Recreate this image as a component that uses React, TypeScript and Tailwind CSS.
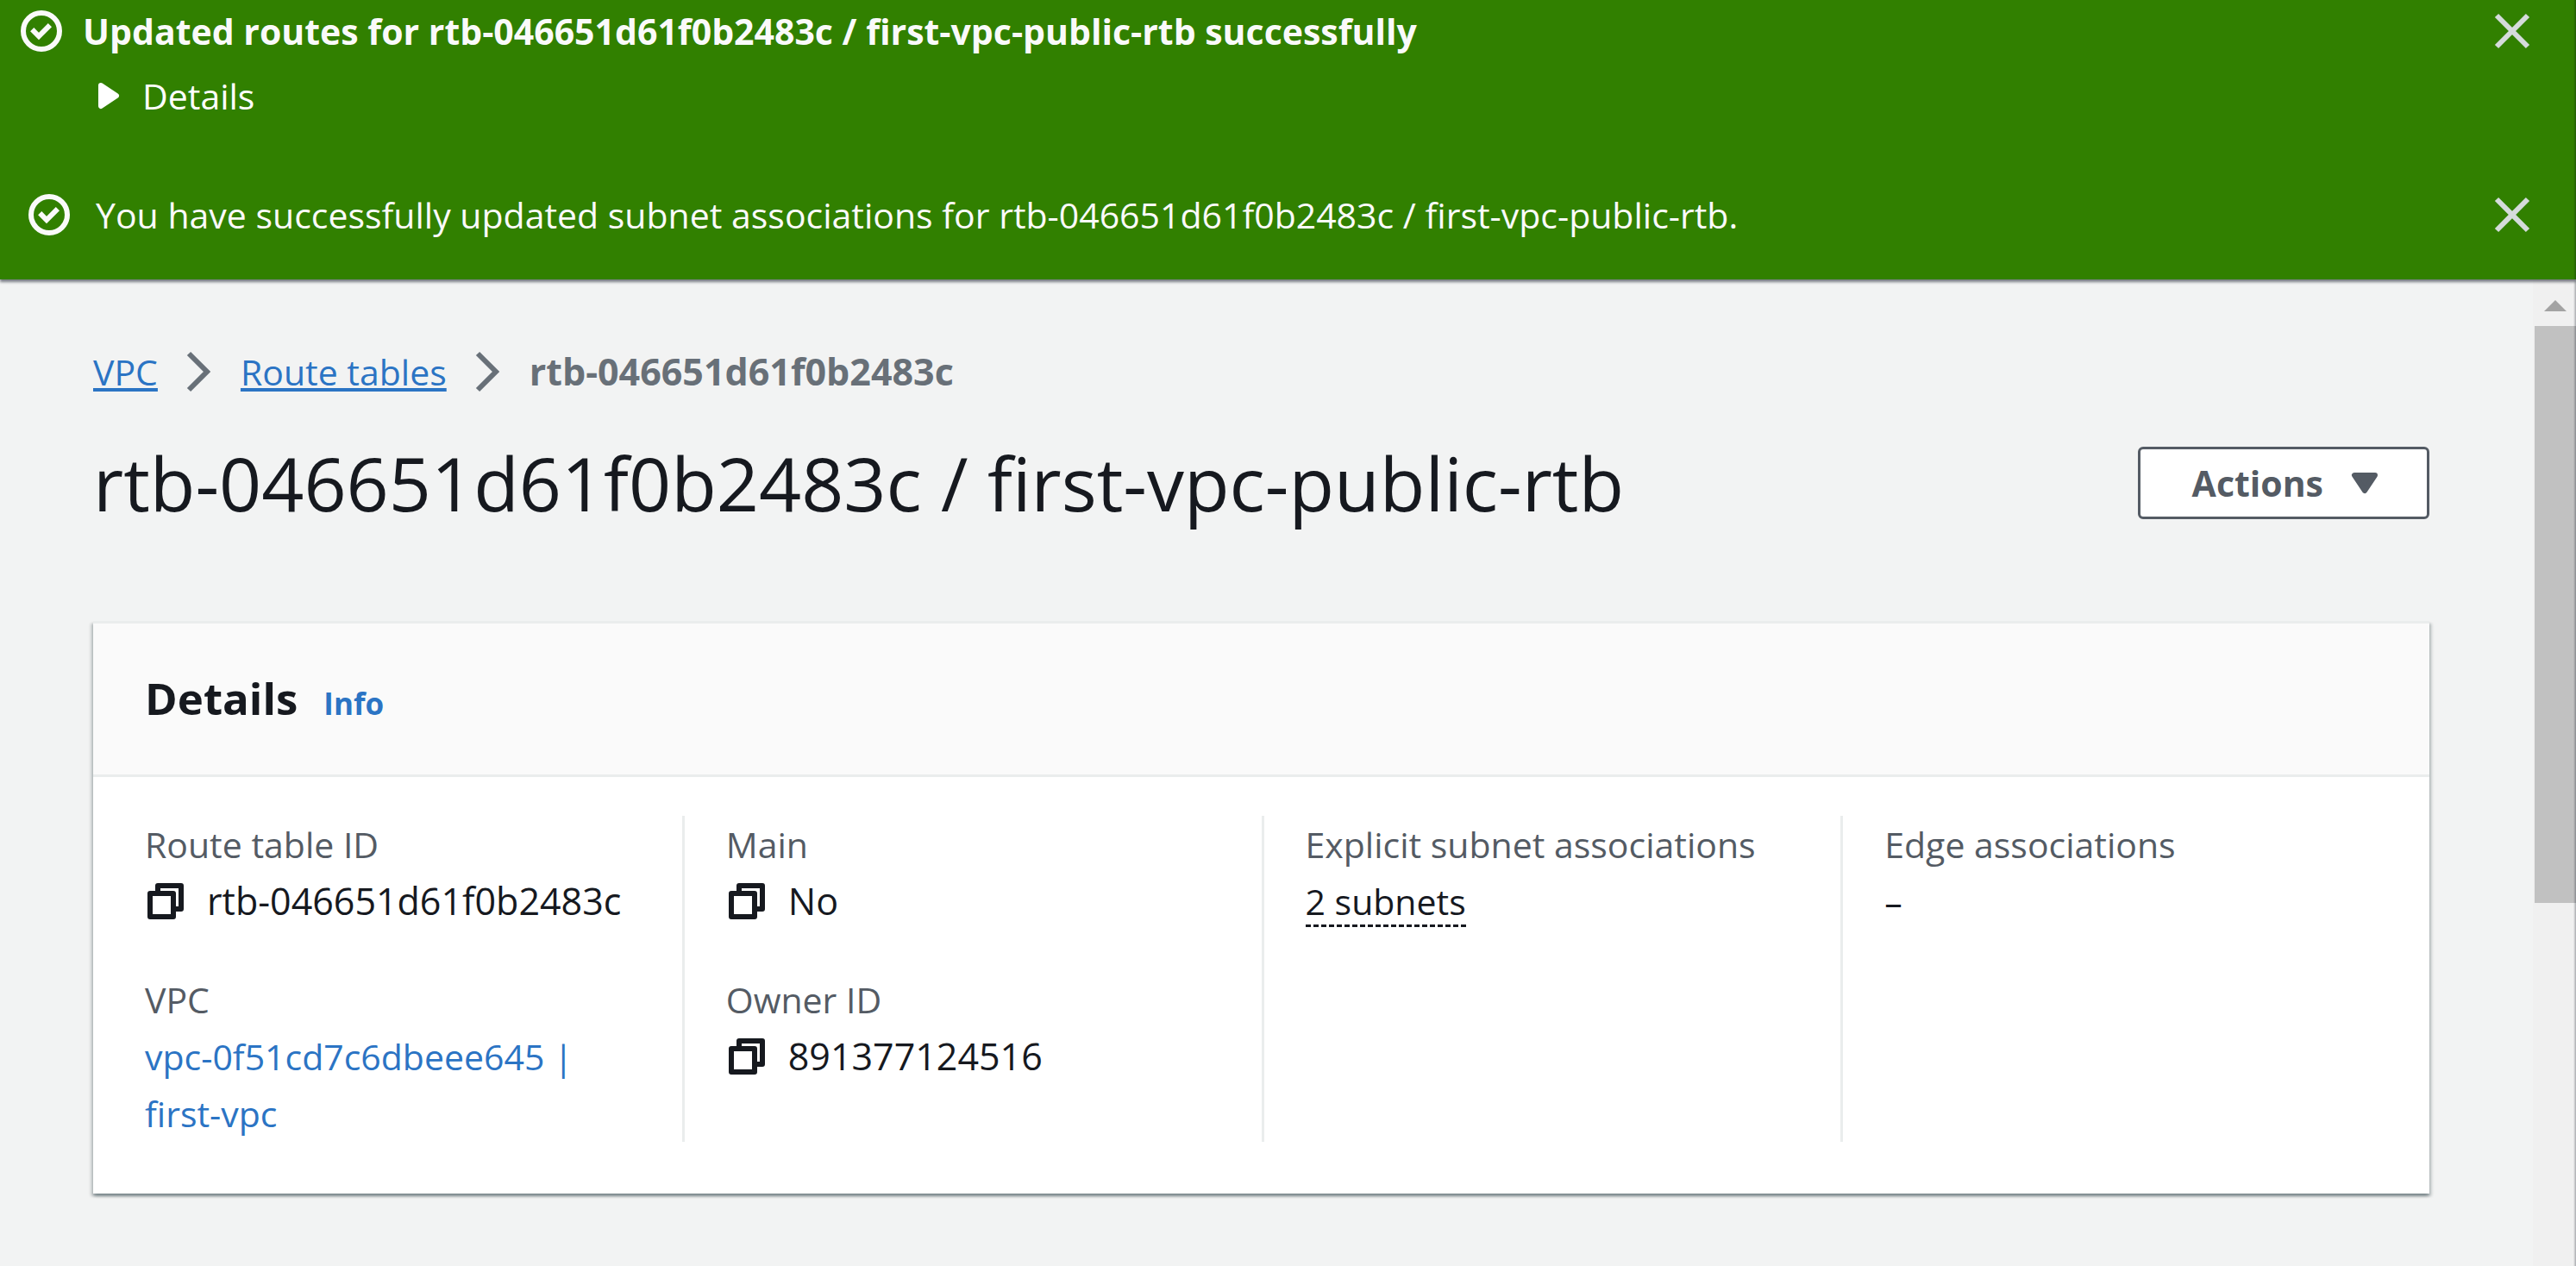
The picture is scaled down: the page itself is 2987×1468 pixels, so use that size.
import React, { useState } from 'react';

const strokeProps = {
  fill: 'none',
  stroke: 'currentColor',
  strokeWidth: 2,
} as const;

function CheckIcon() {
  return (
    <svg viewBox="0 0 16 16" className="size-12 shrink-0" aria-hidden="true">
      <circle cx="8" cy="8" r="7" {...strokeProps} />
      <path d="M4.4 7.4 7 10l4.3-4.3" {...strokeProps} />
    </svg>
  );
}

function CloseIcon() {
  return (
    <svg viewBox="0 0 16 16" className="size-12" aria-hidden="true">
      <path d="m2 2 12 12M14 2 2 14" {...strokeProps} />
    </svg>
  );
}

function ChevronIcon() {
  return (
    <svg viewBox="0 0 16 16" className="size-12 shrink-0 text-[#687078]" aria-hidden="true">
      <path d="m4 1 7 7-7 7" {...strokeProps} />
    </svg>
  );
}

function CopyIcon() {
  return (
    <svg viewBox="0 0 16 16" className="size-12" aria-hidden="true">
      <g {...strokeProps} strokeLinejoin="round">
        <path d="M2 5h9v9H2z" />
        <path d="M5 5V2h9v9h-3" />
      </g>
    </svg>
  );
}

function CaretIcon({ className }: { className: string }) {
  return (
    <svg viewBox="0 0 16 16" className={className} aria-hidden="true">
      <path
        d="M4 5h8L8 11z"
        fill="currentColor"
        stroke="currentColor"
        strokeWidth="2"
        strokeLinejoin="round"
      />
    </svg>
  );
}

function CloseButton({ onClick }: { onClick: () => void }) {
  return (
    <button type="button" aria-label="Dismiss" onClick={onClick} className="mr-[50px] shrink-0 text-[#d5dbdb]">
      <CloseIcon />
    </button>
  );
}

function Notifications() {
  const [first, setFirst] = useState(true);
  const [second, setSecond] = useState(true);
  return (
    <div className="relative z-10 bg-[#318000] pt-[3px] pb-[42px] text-[#fafafa] shadow-[0_3px_3px_0_rgba(0,7,22,0.5)]">
      {first && (
        <div role="status" className="mb-[72px]">
          <div className="flex items-center pl-6">
            <CheckIcon />
            <p className="ml-6 flex-1 font-bold">
              Updated routes for rtb-046651d61f0b2483c / first-vpc-public-rtb successfully
            </p>
            <CloseButton onClick={() => setFirst(false)} />
          </div>
          <button type="button" className="mt-[9px] ml-[102px] flex items-center gap-[15px] text-white">
            <CaretIcon className="size-12 -rotate-90" />
            Details
          </button>
        </div>
      )}
      {second && (
        <div role="status" className="flex items-center pl-[33px]">
          <CheckIcon />
          <p className="ml-[30px] flex-1">
            You have successfully updated subnet associations for rtb-046651d61f0b2483c / first-vpc-public-rtb.
          </p>
          <CloseButton onClick={() => setSecond(false)} />
        </div>
      )}
    </div>
  );
}

function Field({ label, children }: { label: string; children: React.ReactNode }) {
  return (
    <div>
      <dt className="text-[#545b64]">{label}</dt>
      <dd>{children}</dd>
    </div>
  );
}

function Copyable({ text }: { text: string }) {
  return (
    <span className="flex items-center gap-6 text-[43px]">
      <button type="button" aria-label={`Copy ${text}`}>
        <CopyIcon />
      </button>
      {text}
    </span>
  );
}

const column = 'flex flex-col gap-12 border-l-3 border-[#eaeded] px-12';

function DetailsCard() {
  return (
    <section className="mt-[106px] border-t-3 border-[#eaeded] bg-white shadow-[0_3px_3px_0_rgba(0,28,36,0.3),3px_3px_3px_0_rgba(0,28,36,0.15),-3px_3px_3px_0_rgba(0,28,36,0.15)]">
      <header className="flex items-baseline gap-[30px] border-b-3 border-[#eaeded] bg-[#fafafa] pt-[53px] pb-[56px] pl-[60px]">
        <h2 className="text-[51px] leading-[66px] font-bold">Details</h2>
        <a href="#info" className="text-[35px] leading-[48px] font-bold text-[#2b74c4]">
          Info
        </a>
      </header>
      <dl className="mx-[11px] grid grid-cols-4 pt-[45px] pb-[60px]">
        <div className="flex flex-col gap-12 pr-12 pl-[49px]">
          <Field label="Route table ID">
            <Copyable text="rtb-046651d61f0b2483c" />
          </Field>
          <Field label="VPC">
            <a href="#vpc" className="text-[#2b74c4]">
              vpc-0f51cd7c6dbeee645 | first-vpc
            </a>
          </Field>
        </div>
        <div className={column}>
          <Field label="Main">
            <Copyable text="No" />
          </Field>
          <Field label="Owner ID">
            <Copyable text="891377124516" />
          </Field>
        </div>
        <div className={column}>
          <Field label="Explicit subnet associations">
            <button type="button" className="border-b-3 border-dashed border-[#16191f] leading-[54px]">
              2 subnets
            </button>
          </Field>
        </div>
        <div className={column}>
          <Field label="Edge associations">–</Field>
        </div>
      </dl>
    </section>
  );
}

function Scrollbar() {
  return (
    <div className="flex w-[50px] shrink-0 flex-col bg-[#f0f0f0] pl-[2px]" aria-hidden="true">
      <div className="flex h-[54px] items-center justify-center pt-[6px]">
        <svg viewBox="0 0 26 13" className="w-[26px] text-[#a3a3a3]">
          <path d="M13 0 26 13H0z" fill="currentColor" />
        </svg>
      </div>
      <div className="flex-[35] bg-[#c1c1c1]" />
      <div className="flex-[22]" />
    </div>
  );
}

const crumbLink = 'text-[#2b74c4] underline decoration-4 underline-offset-[3px]';

export default function App() {
  return (
    <div className="relative flex min-h-screen flex-col bg-[#f2f3f3] font-['Open_Sans',sans-serif] text-[41px] leading-[66px] text-[#16191f]">
      <Notifications />
      <div className="flex flex-1">
        <main className="flex-1 pt-[74px] pr-[120px] pl-[108px]">
          <nav aria-label="Breadcrumbs">
            <ol className="flex items-center gap-6">
              <li className="flex items-center gap-6">
                <a href="#vpc-home" className={crumbLink}>
                  VPC
                </a>
                <ChevronIcon />
              </li>
              <li className="flex items-center gap-6">
                <a href="#route-tables" className={crumbLink}>
                  Route tables
                </a>
                <ChevronIcon />
              </li>
              <li className="text-[43px] font-bold text-[#687078]">rtb-046651d61f0b2483c</li>
            </ol>
          </nav>
          <div className="mt-[42px] flex items-center justify-between">
            <h1 className="text-[86px] leading-[108px]">rtb-046651d61f0b2483c / first-vpc-public-rtb</h1>
            <button
              type="button"
              className="flex h-[84px] items-center gap-6 rounded-md border-3 border-[#545b64] bg-white pr-[48px] pl-[60px] font-bold text-[#545b64]"
            >
              Actions
              <CaretIcon className="size-12" />
            </button>
          </div>
          <DetailsCard />
        </main>
        <Scrollbar />
      </div>
      <div className="pointer-events-none absolute inset-y-0 right-0 z-20 w-[3px] bg-linear-to-r from-transparent to-[#0007164d]" />
    </div>
  );
}
